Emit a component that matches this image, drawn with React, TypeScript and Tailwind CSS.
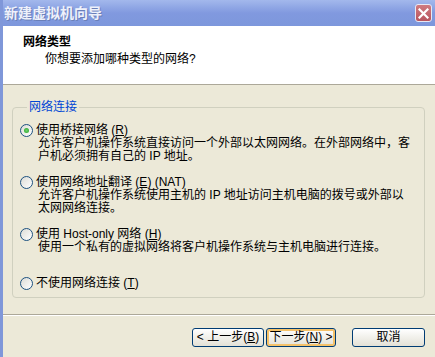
// App.tsx — XP style "new virtual machine" wizard, network type page
export default function App() {
  const options = [
    {
      label: "使用桥接网络",
      key: "R",
      extra: "",
      checked: true,
      lines: [
        "允许客户机操作系统直接访问一个外部以太网网络。在外部网络中，客",
        "户机必须拥有自己的 IP 地址。",
      ],
      rowClass: "mt-0",
    },
    {
      label: "使用网络地址翻译",
      key: "E",
      extra: " (NAT)",
      checked: false,
      lines: [
        "允许客户机操作系统使用主机的 IP 地址访问主机电脑的拨号或外部以",
        "太网网络连接。",
      ],
      rowClass: "mt-[13px]",
    },
    {
      label: "使用 Host-only 网络",
      key: "H",
      extra: "",
      checked: false,
      lines: ["使用一个私有的虚拟网络将客户机操作系统与主机电脑进行连接。"],
      rowClass: "mt-[13px]",
    },
    {
      label: "不使用网络连接",
      key: "T",
      extra: "",
      checked: false,
      lines: [],
      rowClass: "mt-[23px]",
    },
  ];

  return (
    <div className="w-[435px] h-[357px] overflow-hidden flex flex-col bg-[#ece9d8] border-l-[3px] border-[#7f97d9] text-black text-[12px] leading-[13px] font-['Liberation_Sans','Noto_Sans_CJK_SC',sans-serif]">
      {/* title bar */}
      <div className="h-[26px] shrink-0 flex items-center justify-between pl-[1px] pr-[3px] bg-gradient-to-b from-[#a3b8ec] via-[#8199df] to-[#7d97dc]">
        <span className="text-[14px] leading-[15px] font-bold text-[#eef1fb] [text-shadow:1px_1px_0_#6a7fb8]">
          新建虚拟机向导
        </span>
        <div className="w-[17px] h-[18px] rounded-[3px] border border-[#e8e8f4] bg-gradient-to-b from-[#cf7a80] to-[#b8545e] flex items-center justify-center">
          <svg width="11" height="11" viewBox="0 0 11 11">
            <path d="M1.5 1.5 L9.5 9.5 M9.5 1.5 L1.5 9.5" stroke="white" strokeWidth="2.2" strokeLinecap="square" />
          </svg>
        </div>
      </div>

      {/* header */}
      <div className="h-[59px] shrink-0 bg-white border-b border-[#aca899] pl-[20px] pt-[9px]">
        <div className="font-bold leading-[14px]">网络类型</div>
        <div className="pl-[22px] mt-[3px] leading-[14px]">你想要添加哪种类型的网络?</div>
      </div>

      {/* group box */}
      <fieldset className="mt-[15px] ml-[9px] mr-[10px] h-[198px] rounded-[4px] border border-[#d0d0bf] pl-[7px] pt-[10px]">
        <legend className="ml-[7px] px-[2px] text-[#0046d5] leading-[14px]">网络连接</legend>
        {options.map((o) => (
          <div key={o.key} className={o.rowClass}>
            <div className="flex items-center gap-[3px]">
              <span className="w-[13px] h-[13px] rounded-full border border-[#1c5180] bg-gradient-to-br from-[#dcdcd6] to-white flex items-center justify-center">
                {o.checked && (
                  <span className="w-[5px] h-[5px] rounded-full bg-[radial-gradient(circle,#6fd26f,#21a121)]" />
                )}
              </span>
              <span>
                {o.label} (<u>{o.key}</u>){o.extra}
              </span>
            </div>
            {o.lines.length > 0 && (
              <div className="pl-[18px]">
                {o.lines.map((l) => (
                  <div key={l} className="whitespace-nowrap">
                    {l}
                  </div>
                ))}
              </div>
            )}
          </div>
        ))}
      </fieldset>

      {/* separator */}
      <div className="mt-[16px] border-t border-[#aca899] border-b border-b-white" />

      {/* buttons */}
      <div className="mt-[12px] flex justify-end pr-[10px]">
        <button className="w-[72px] h-[19px] rounded-[3px] border border-[#003c74] bg-gradient-to-b from-white to-[#e3e1d6] leading-[13px]">
          &lt; 上一步(<u>B</u>)
        </button>
        <button className="ml-[2px] w-[70px] h-[19px] rounded-[3px] border border-[#003c74] bg-gradient-to-b from-white to-[#e3e1d6] shadow-[inset_0_0_0_2px_#f5c26a] leading-[13px]">
          下一步(<u>N</u>) &gt;
        </button>
        <button className="ml-[16px] w-[73px] h-[19px] rounded-[3px] border border-[#003c74] bg-gradient-to-b from-white to-[#e3e1d6] leading-[13px]">
          取消
        </button>
      </div>
    </div>
  );
}
